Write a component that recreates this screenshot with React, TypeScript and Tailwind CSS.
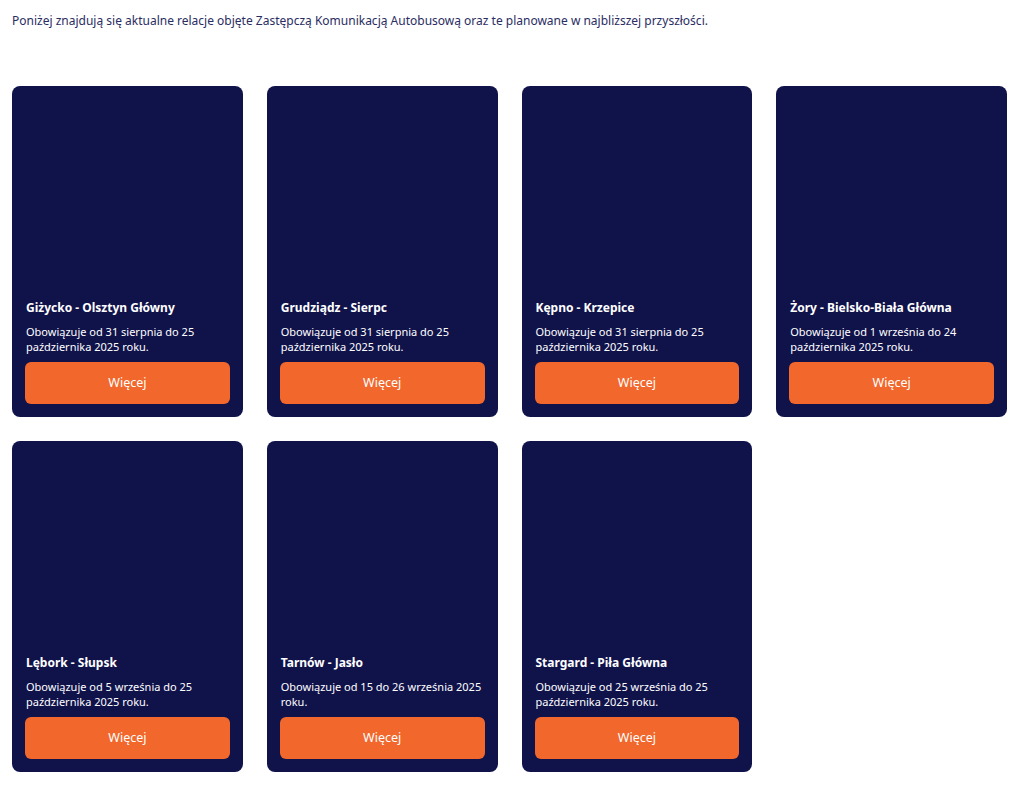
import React from 'react';

interface Route {
  name: string;
  info: string;
}

const routes: Route[] = [
  { name: 'Giżycko - Olsztyn Główny', info: 'Obowiązuje od 31 sierpnia do 25 października 2025 roku.' },
  { name: 'Grudziądz - Sierpc', info: 'Obowiązuje od 31 sierpnia do 25 października 2025 roku.' },
  { name: 'Kępno - Krzepice', info: 'Obowiązuje od 31 sierpnia do 25 października 2025 roku.' },
  { name: 'Żory - Bielsko-Biała Główna', info: 'Obowiązuje od 1 września do 24 października 2025 roku.' },
  { name: 'Lębork - Słupsk', info: 'Obowiązuje od 5 września do 25 października 2025 roku.' },
  { name: 'Tarnów - Jasło', info: 'Obowiązuje od 15 do 26 września 2025 roku.' },
  { name: 'Stargard - Piła Główna', info: 'Obowiązuje od 25 września do 25 października 2025 roku.' },
];

const RouteCard: React.FC<{ route: Route }> = ({ route }) => (
  <div className="h-[331px] bg-[#10124a] rounded-lg flex flex-col justify-end px-[13px] pb-[13px]">
    <h3 className="pl-px text-[12px] leading-[15px] font-bold text-white">{route.name}</h3>
    <p className="pl-px mt-[9px] text-[11px] leading-[15px] text-white">{route.info}</p>
    <button className="mt-[8px] h-[42px] w-full rounded-md bg-[#f1672c] text-white text-[12.5px]">
      Więcej
    </button>
  </div>
);

export default function App() {
  return (
    <div className="min-h-screen bg-white px-3 pt-[12px] font-['Noto_Sans',sans-serif]">
      <p className="text-[12px] leading-[18px] text-[#2a2d62]">
        Poniżej znajdują się aktualne relacje objęte Zastępczą Komunikacją Autobusową oraz te planowane w najbliższej przyszłości.
      </p>
      <div className="mt-[56px] grid grid-cols-4 gap-x-6 gap-y-6 pr-[5px]">
        {routes.map((r) => (
          <RouteCard key={r.name} route={r} />
        ))}
      </div>
    </div>
  );
}
